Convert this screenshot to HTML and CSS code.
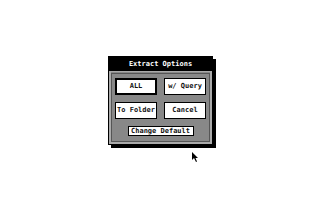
FILE: index.html
```
<!DOCTYPE html>
<html>
<head>
<meta charset="utf-8">
<link rel="stylesheet" href="styles.css">
</head>
<body>
<div class="screen">
  <div class="dialog">
    <div class="title">Extract Options</div>
    <div class="body">
      <div class="grid">
        <div class="btn default">ALL</div>
        <div class="btn">w/ Query</div>
        <div class="btn">To Folder</div>
        <div class="btn">Cancel</div>
      </div>
      <div class="small-btn">Change Default</div>
    </div>
  </div>
  <svg class="cursor" width="8" height="10" viewBox="0 0 8 10"><path d="M0 0 L0 8 L2 6 L4 10 L5 9.5 L3.5 6 L6 6 Z" fill="#000"/></svg>
</div>
</body>
</html>
```
FILE: styles.css
```
html, body { margin: 0; padding: 0; background: #fff; }
.screen { position: relative; width: 320px; height: 200px; padding-top: 56px; box-sizing: border-box; }
.dialog {
  margin-left: 108px;
  width: 103px;
  border: 1px solid #000;
  box-shadow: 3px 3px 0 #000;
  background: #888;
  font-family: "DejaVu Sans Mono", monospace;
  font-weight: bold;
  font-size: 7px;
}
.title {
  height: 14px;
  line-height: 14px;
  background: #000;
  color: #fff;
  text-align: center;
}
.body {
  border: 2px solid #aaa;
  border-top-width: 1px;
  outline: 1px solid #555;
  outline-offset: -3px;
  padding: 6px 0 6px 0;
  display: flex;
  flex-direction: column;
  align-items: center;
  gap: 7px;
}
.grid {
  display: grid;
  grid-template-columns: 42px 42px;
  column-gap: 7px;
  row-gap: 7px;
}
.btn {
  height: 15px;
  line-height: 15px;
  background: #fff;
  border: 1px solid #000;
  text-align: center;
  color: #111;
}
.btn.default { border-width: 2px; height: 13px; line-height: 13px; }
.small-btn {
  width: 64px;
  height: 8px;
  line-height: 8px;
  background: #fff;
  border: 1px solid #000;
  text-align: center;
  color: #111;
}
.cursor { position: absolute; left: 192px; top: 152px; }
```
